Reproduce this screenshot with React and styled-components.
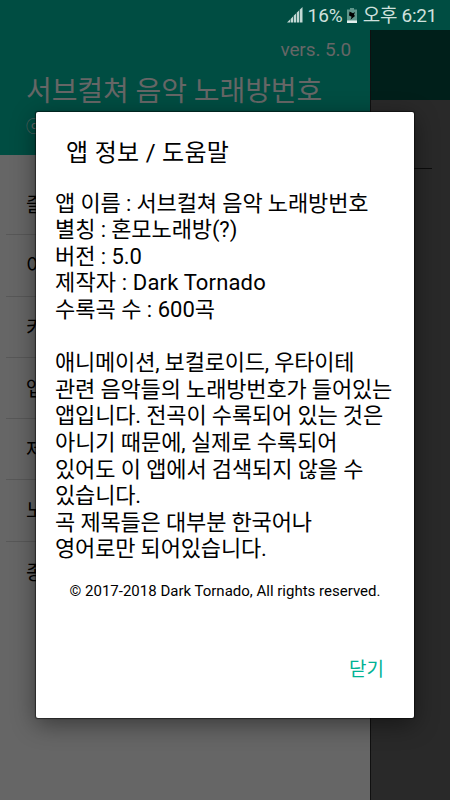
import styled, { createGlobalStyle } from "styled-components";

const menus = ["즐", "이", "카", "앱", "제", "노", "종"];

const infos = [
  { text: "앱 이름 : 서브컬쳐 음악 노래방번호", gap: -0.13 },
  { text: "별칭 : 혼모노래방(?)", gap: -0.1 },
  { text: "버전 : 5.0", gap: -0.05 },
  { text: "제작자 : Dark Tornado", gap: 0.15 },
  { text: "수록곡 수 : 600곡", gap: 0 },
];

const helps = [
  { text: "애니메이션, 보컬로이드, 우타이테", gap: -0.2 },
  { text: "관련 음악들의 노래방번호가 들어있는", gap: -0.16 },
  { text: "앱입니다. 전곡이 수록되어 있는 것은", gap: -0.16 },
  { text: "아니기 때문에, 실제로 수록되어", gap: -0.08 },
  { text: "있어도 이 앱에서 검색되지 않을 수", gap: -0.12 },
  { text: "있습니다.", gap: -0.16 },
  { text: "곡 제목들은 대부분 한국어나", gap: -0.16 },
  { text: "영어로만 되어있습니다.", gap: -0.16 },
];

function SignalIcon() {
  return (
    <svg width="16" height="16" viewBox="0 0 16 16" fill="#c3d8d4">
      <path d="M0 15.5 L3 12.5 V15.5 Z" />
      <path d="M3.6 11.9 L6 9.5 V15.5 H3.6 Z" />
      <path d="M6.7 8.8 L9 6.5 V15.5 H6.7 Z" />
      <path d="M9.7 5.8 L12 3.5 V15.5 H9.7 Z" />
      <path d="M12.7 2.8 L15.5 0 V15.5 H12.7 Z" />
    </svg>
  );
}

function BatteryIcon() {
  return (
    <svg width="10" height="15" viewBox="0 0 10 15">
      <path d="M3 0 H7 V1.5 H10 V15 H0 V1.5 H3 Z" fill="#5f968b" />
      <rect y="12.5" width="10" height="2.5" fill="#e4efed" />
      <path d="M2.5 3.5 L6 5.2 L8 4 L7 6.8 L8 8 L3.5 11.8 L4.6 8.7 L2 7.6 Z" fill="#000" />
    </svg>
  );
}

function App() {
  return (
    <Screen>
      <GlobalStyle />
      <StatusBar>
        <SignalIcon />
        <Battery>16%</Battery>
        <BatteryIcon />
        <Clock>오후 6:21</Clock>
      </StatusBar>
      <Body>
        <Drawer>
          <DrawerHeader>
            <Version>vers. 5.0</Version>
            <AppName>서브컬쳐 음악 노래방번호</AppName>
            <Maker>ⓒ</Maker>
          </DrawerHeader>
          <MenuList>
            {menus.map((m) => (
              <MenuItem key={m}>{m}</MenuItem>
            ))}
          </MenuList>
        </Drawer>
        <Main>
          <Toolbar />
          <InputLine />
        </Main>
      </Body>
      <Overlay>
        <Dialog>
          <DialogTitle>앱 정보 / 도움말</DialogTitle>
          <Contents>
            {infos.map((info) => (
              <Line key={info.text} $gap={info.gap}>
                {info.text}
              </Line>
            ))}
            <Line />
            {helps.map((help) => (
              <Line key={help.text} $gap={help.gap}>
                {help.text}
              </Line>
            ))}
          </Contents>
          <Copyright>© 2017-2018 Dark Tornado, All rights reserved.</Copyright>
          <Buttons>
            <CloseButton>닫기</CloseButton>
          </Buttons>
        </Dialog>
      </Overlay>
    </Screen>
  );
}

const GlobalStyle = createGlobalStyle`
  body {
    margin: 0;
    font-family: Roboto, "Noto Sans CJK KR", sans-serif;
  }
  * {
    box-sizing: border-box;
  }
`;
const Screen = styled.div`
  position: relative;
  display: flex;
  flex-direction: column;
  width: 450px;
  height: 800px;
  overflow: hidden;
  white-space: nowrap;
`;
const StatusBar = styled.div`
  display: flex;
  justify-content: flex-end;
  align-items: center;
  height: 30px;
  padding-right: 13px;
  background: #004d42;
  color: #cfe0dd;
  font-size: 19px;
  line-height: 30px;
`;
const Battery = styled.span`
  margin: 0 4px 0 5px;
  padding-top: 2px;
`;
const Clock = styled.span`
  margin-left: 6px;
  padding-top: 2px;
  letter-spacing: -0.3px;
`;
const Body = styled.div`
  display: flex;
  flex: 1;
`;
const Drawer = styled.div`
  width: 370px;
  background: #666;
`;
const DrawerHeader = styled.div`
  height: 125px;
  padding: 8px 19px 0 26px;
  background: #004d42;
  color: #666;
`;
const Version = styled.div`
  text-align: right;
  font-size: 19px;
  line-height: 24px;
  letter-spacing: -0.1px;
`;
const AppName = styled.div`
  margin-top: 10px;
  font-size: 28px;
  line-height: 40px;
  letter-spacing: -0.08px;
`;
const Maker = styled.div`
  margin-top: 5px;
  font-size: 16px;
  line-height: 20px;
`;
const MenuList = styled.div`
  padding: 19px 0 0 6px;
`;
const MenuItem = styled.div`
  height: 61.3px;
  padding-left: 20px;
  border-bottom: 1px solid #585858;
  color: #000;
  font-size: 20px;
  line-height: 62px;
  &:last-child {
    border-bottom: none;
  }
`;
const Main = styled.div`
  flex: 1;
  background: #292929;
  border-left: 1px solid #101010;
`;
const Toolbar = styled.div`
  height: 70px;
  background: #001f1a;
`;
const InputLine = styled.div`
  height: 69px;
  margin-right: 18px;
  border-bottom: 1px solid #0c0c0c;
`;
const Overlay = styled.div`
  position: absolute;
  inset: 0;
  display: flex;
  justify-content: center;
  align-items: flex-start;
  padding-top: 112px;
`;
const Dialog = styled.div`
  display: flex;
  flex-direction: column;
  width: 378px;
  height: 606px;
  padding: 21px 20px 0 19px;
  background: #fff;
  border-radius: 2px;
  box-shadow: 0 0 1px 1px rgba(0, 0, 0, 0.5), 0 6px 24px rgba(0, 0, 0, 0.45);
  color: #000;
`;
const DialogTitle = styled.div`
  padding-left: 11px;
  font-size: 24px;
  line-height: 40px;
  letter-spacing: 0.3px;
`;
const Contents = styled.div`
  margin-top: 17.6px;
  font-size: 22px;
`;
const Line = styled.div`
  height: 26.6px;
  line-height: 26.6px;
  letter-spacing: ${(props) => props.$gap || 0}px;
`;
const Copyright = styled.div`
  margin-top: 18.4px;
  padding-left: 1px;
  text-align: center;
  font-size: 15px;
  line-height: 20px;
`;
const Buttons = styled.div`
  display: flex;
  justify-content: flex-end;
  margin-top: 54px;
  padding-right: 10px;
`;
const CloseButton = styled.button`
  padding: 0;
  border: none;
  background: none;
  color: #00b294;
  font-family: inherit;
  font-size: 19px;
  line-height: 30px;
`;

export default App;
